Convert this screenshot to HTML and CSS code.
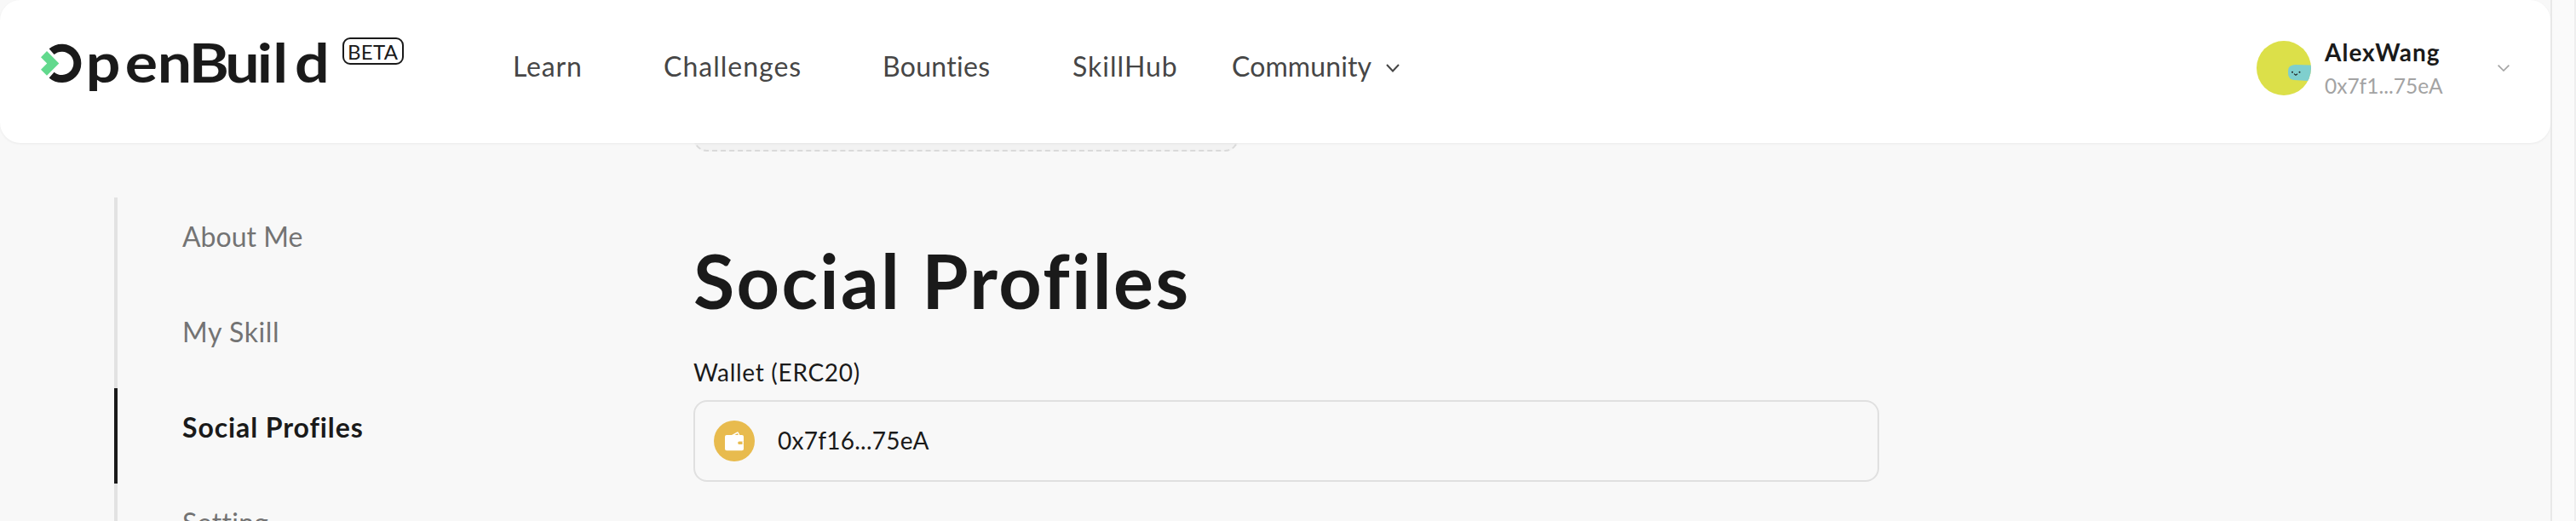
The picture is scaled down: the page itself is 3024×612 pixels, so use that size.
FILE: index.html
```html
<!DOCTYPE html>
<html lang="en">
<head>
<meta charset="utf-8">
<title>OpenBuild</title>
<link rel="stylesheet" href="styles.css">
</head>
<body>
<div class="page">
  <header class="header">
    <svg class="logo" viewBox="48 40 428 80" role="img" aria-label="OpenBuild beta">
      <path class="logo-ring" d="M60.6 60.7A18.2 18.2 0 1 1 60.6 88"/>
      <path class="logo-chevron" d="M55 60L69.3 74.4L55 88.8L48 81.7L55.2 74.4L48 67.2Z"/>
      <text class="logo-word" transform="scale(1.12 1)" y="97" x="90 131 165 198 236 269.5 286 309">penBuild</text>
      <rect class="beta-box" x="403" y="45" width="70" height="30" rx="8"/>
      <text class="beta-text" x="408" y="70">BETA</text>
    </svg>
    <nav class="nav">
      <a class="sp-8">Learn</a>
      <a class="sp-10">Challenges</a>
      <a class="sp-3">Bounties</a>
      <a class="sp-10">SkillHub</a>
      <a class="nav-more">Community
        <svg class="nav-chevron" viewBox="0 0 16 10"><path d="M1 1L8 8.5L15 1"/></svg>
      </a>
    </nav>
    <div class="user">
      <svg class="avatar" viewBox="0 0 64 64">
        <defs><clipPath id="disc"><circle cx="32" cy="32" r="32"/></clipPath></defs>
        <g clip-path="url(#disc)">
          <rect width="64" height="64" fill="#dce049"/>
          <path d="M45 28L66 28.5V47.5L44 46Q37 45 37 38V35Q37 28.5 45 28Z" fill="#7fcfce"/>
          <path d="M44 38.6L46 40.4L48 38.8" fill="none" stroke="#222" stroke-width="1.1"/>
          <circle cx="42" cy="36.8" r="1" fill="#222"/>
          <circle cx="50.5" cy="36.8" r="1" fill="#222"/>
        </g>
      </svg>
      <div class="user-text">
        <span class="user-name">AlexWang</span>
        <span class="user-address">0x7f1...75eA</span>
      </div>
      <svg class="user-chevron" viewBox="0 0 14 8"><path d="M.6 .6L7 7L13.4 .6"/></svg>
    </div>
  </header>
  <div class="body">
    <aside class="side">
      <a class="side-item">About Me</a>
      <a class="side-item sp-6">My Skill</a>
      <a class="side-item active">Social Profiles</a>
      <a class="side-item sp-3">Setting</a>
    </aside>
    <main class="main">
      <div class="upload"></div>
      <h1 class="title">Social Profiles</h1>
      <div class="label">Wallet (ERC20)</div>
      <div class="field">
        <svg class="wallet" viewBox="0 0 48 48">
          <circle cx="24" cy="24" r="24" fill="#e8bb4e"/>
          <path d="M15 17H21L27.3 13.5Q28.4 13 29 14.2L30.4 17H33Q35 17 35 19V24.8H29.5Q28.5 24.8 28.5 26V26.6Q28.5 27.8 29.5 27.8H35V33.2Q35 35.2 33 35.2H15Q13 35.2 13 33.2V19Q13 17 15 17Z" fill="#fff"/>
          <path d="M24.4 17L27.8 15.1L28.8 17Z" fill="#e8bb4e"/>
          <rect x="28.5" y="24.8" width="5" height="3" rx="1" fill="#e8bb4e"/>
          <path d="M33.5 24.8H35V27.8H33.5Z" fill="#fff"/>
        </svg>
        <span class="field-value">0x7f16...75eA</span>
      </div>
    </main>
  </div>
</div>
<div class="gutter"></div>
</body>
</html>
```
FILE: styles.css
```css
* { box-sizing: border-box; }
body {
  margin: 0;
  display: flex;
  height: 612px;
  overflow: hidden;
  background: #f8f8f8;
  color: #1a1a1a;
  font-family: Lato, sans-serif;
}
.page { width: 2994px; height: 612px; overflow: hidden; }
.gutter {
  width: 30px;
  background: #fafafa;
  border-left: 2px solid #e8e8e8;
  border-right: 2px solid #eee;
}
.header {
  position: relative;
  z-index: 1;
  display: flex;
  align-items: center;
  height: 168px;
  padding: 0 48px 8px 48px;
  background: #fff;
  border-radius: 24px;
  box-shadow: 0 1px 3px rgba(0, 0, 0, .06);
}
.logo { width: 428px; height: 80px; overflow: visible; }
.logo-ring { fill: none; stroke: #1a1a1a; stroke-width: 9; }
.logo-chevron { fill: #62d98d; }
.logo-word { font-size: 64px; font-weight: 700; fill: #1a1a1a; }
.beta-box { fill: none; stroke: #1a1a1a; stroke-width: 2; }
.beta-text { font-size: 24px; letter-spacing: .3px; fill: #1a1a1a; }
.nav {
  display: grid;
  grid-template-columns: 177px 257px 223px 187px auto;
  margin-left: 126px;
  padding-bottom: 4px;
  font-size: 32px;
  line-height: 40px;
  color: #464646;
}
.sp-3 { letter-spacing: .3px; }
.sp-6 { letter-spacing: .6px; }
.sp-8 { letter-spacing: .8px; }
.sp-10 { letter-spacing: 1px; }
.nav-more { display: flex; align-items: center; gap: 17px; letter-spacing: .1px; }
.nav-chevron { width: 16px; height: 10px; margin-top: 4px; fill: none; stroke: #464646; stroke-width: 2; }
.user { display: flex; align-items: center; margin-left: auto; }
.avatar { width: 64px; height: 64px; }
.user-text { display: flex; flex-direction: column; width: 203px; margin-left: 16px; padding-top: 2px; line-height: 40px; }
.user-name { font-size: 28px; font-weight: 700; letter-spacing: 1px; }
.user-address { font-size: 24.5px; letter-spacing: 0; color: #a3a3a3; }
.user-chevron { width: 14px; height: 8px; fill: none; stroke: #a3a3a3; stroke-width: 1.6; }
.body { display: flex; padding-left: 134px; }
.side { display: flex; flex-direction: column; width: 680px; padding-top: 64px; }
.side-item {
  flex: none;
  height: 112px;
  padding: 26px 0 0 76px;
  border-left: 4px solid #e2e2e2;
  font-size: 32px;
  line-height: 40px;
  color: #737373;
}
.side-item.active { border-color: #1a1a1a; color: #1a1a1a; font-weight: 700; letter-spacing: .9px; }
.main { width: 1392px; }
.upload {
  width: 640px;
  height: 64px;
  margin-top: -54px;
  background: #f2f2f2;
  border: 2px dashed #dadada;
  border-radius: 16px;
}
.title { margin: 103px 0 0; font-size: 88px; line-height: 96px; font-weight: 700; letter-spacing: 2.4px; }
.label { margin-top: 40px; font-size: 28px; line-height: 40px; letter-spacing: .7px; }
.field {
  display: flex;
  align-items: center;
  gap: 27px;
  height: 96px;
  margin-top: 13px;
  padding: 0 22px;
  border: 2px solid #e0e0e0;
  border-radius: 16px;
}
.wallet { width: 48px; height: 48px; }
.field-value { font-size: 28px; line-height: 40px; letter-spacing: .25px; padding-bottom: 3px; }
```
